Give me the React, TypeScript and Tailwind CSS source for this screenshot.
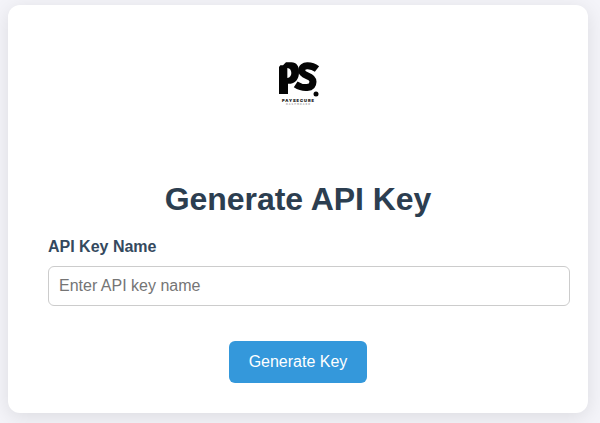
function Logo() {
  return (
    <svg className="h-14 w-14" viewBox="0 0 168 168" role="img" aria-label="PaySecure Dashboard">
      <path
        fill="#050505"
        fillRule="evenodd"
        d="M27 36L31 31H39L48 22H64C80 22 87 34 87 51C87 72 77 84 62 86H54V117H27ZM52 39V69C60 68 64 61 64 54C64 46 60 40 52 39Z"
      />
      <path
        fill="none"
        stroke="#050505"
        strokeWidth="21"
        d="M141 42C124 29 95 28 95 46C95 66 129 58 129 80C129 102 99 102 77 88"
      />
      <circle cx="138" cy="117" r="7.5" fill="#050505" />
      <text x="36" y="139.5" fontSize="12" fontWeight="800" textLength="96" lengthAdjust="spacing" fill="#111" fontFamily="Inter, sans-serif" stroke="#111" strokeWidth="0.4">
        PAYSECURE
      </text>
      <text x="48" y="151" fontSize="7.5" textLength="72" lengthAdjust="spacing" fill="#777" fontFamily="Inter, sans-serif">
        DASHBOARD
      </text>
    </svg>
  );
}

export default function App() {
  return (
    <div className="h-[423px] overflow-hidden bg-[#f4f4f9] pt-[5px] pl-2 font-['Liberation_Sans',Arial,sans-serif]">
      <main className="flex h-[408px] w-[580px] flex-col rounded-xl bg-white px-10 pt-[50px] shadow-[0_4px_20px_rgba(0,0,0,0.1)]">
        <div className="flex justify-center">
          <Logo />
        </div>
        <h1 className="mt-[70px] text-center text-[32px] leading-[37px] font-bold tracking-[-0.05px] text-[#2c3e50]">Generate API Key</h1>
        <form className="flex flex-col items-start" onSubmit={(e) => e.preventDefault()}>
          <label htmlFor="key-name" className="mt-5 text-base leading-[18px] font-bold text-[#34495e]">
            API Key Name
          </label>
          <input
            id="key-name"
            type="text"
            placeholder="Enter API key name"
            className="mt-[10px] h-10 w-[522px] shrink-0 rounded-md border border-[#ccc] bg-white px-2.5 text-base outline-none placeholder:text-[#757575]"
          />
          <button
            type="submit"
            className="mt-[35px] h-[42px] w-[138px] self-center rounded-md bg-[#3498db] text-base text-white"
          >
            Generate Key
          </button>
        </form>
      </main>
    </div>
  );
}
